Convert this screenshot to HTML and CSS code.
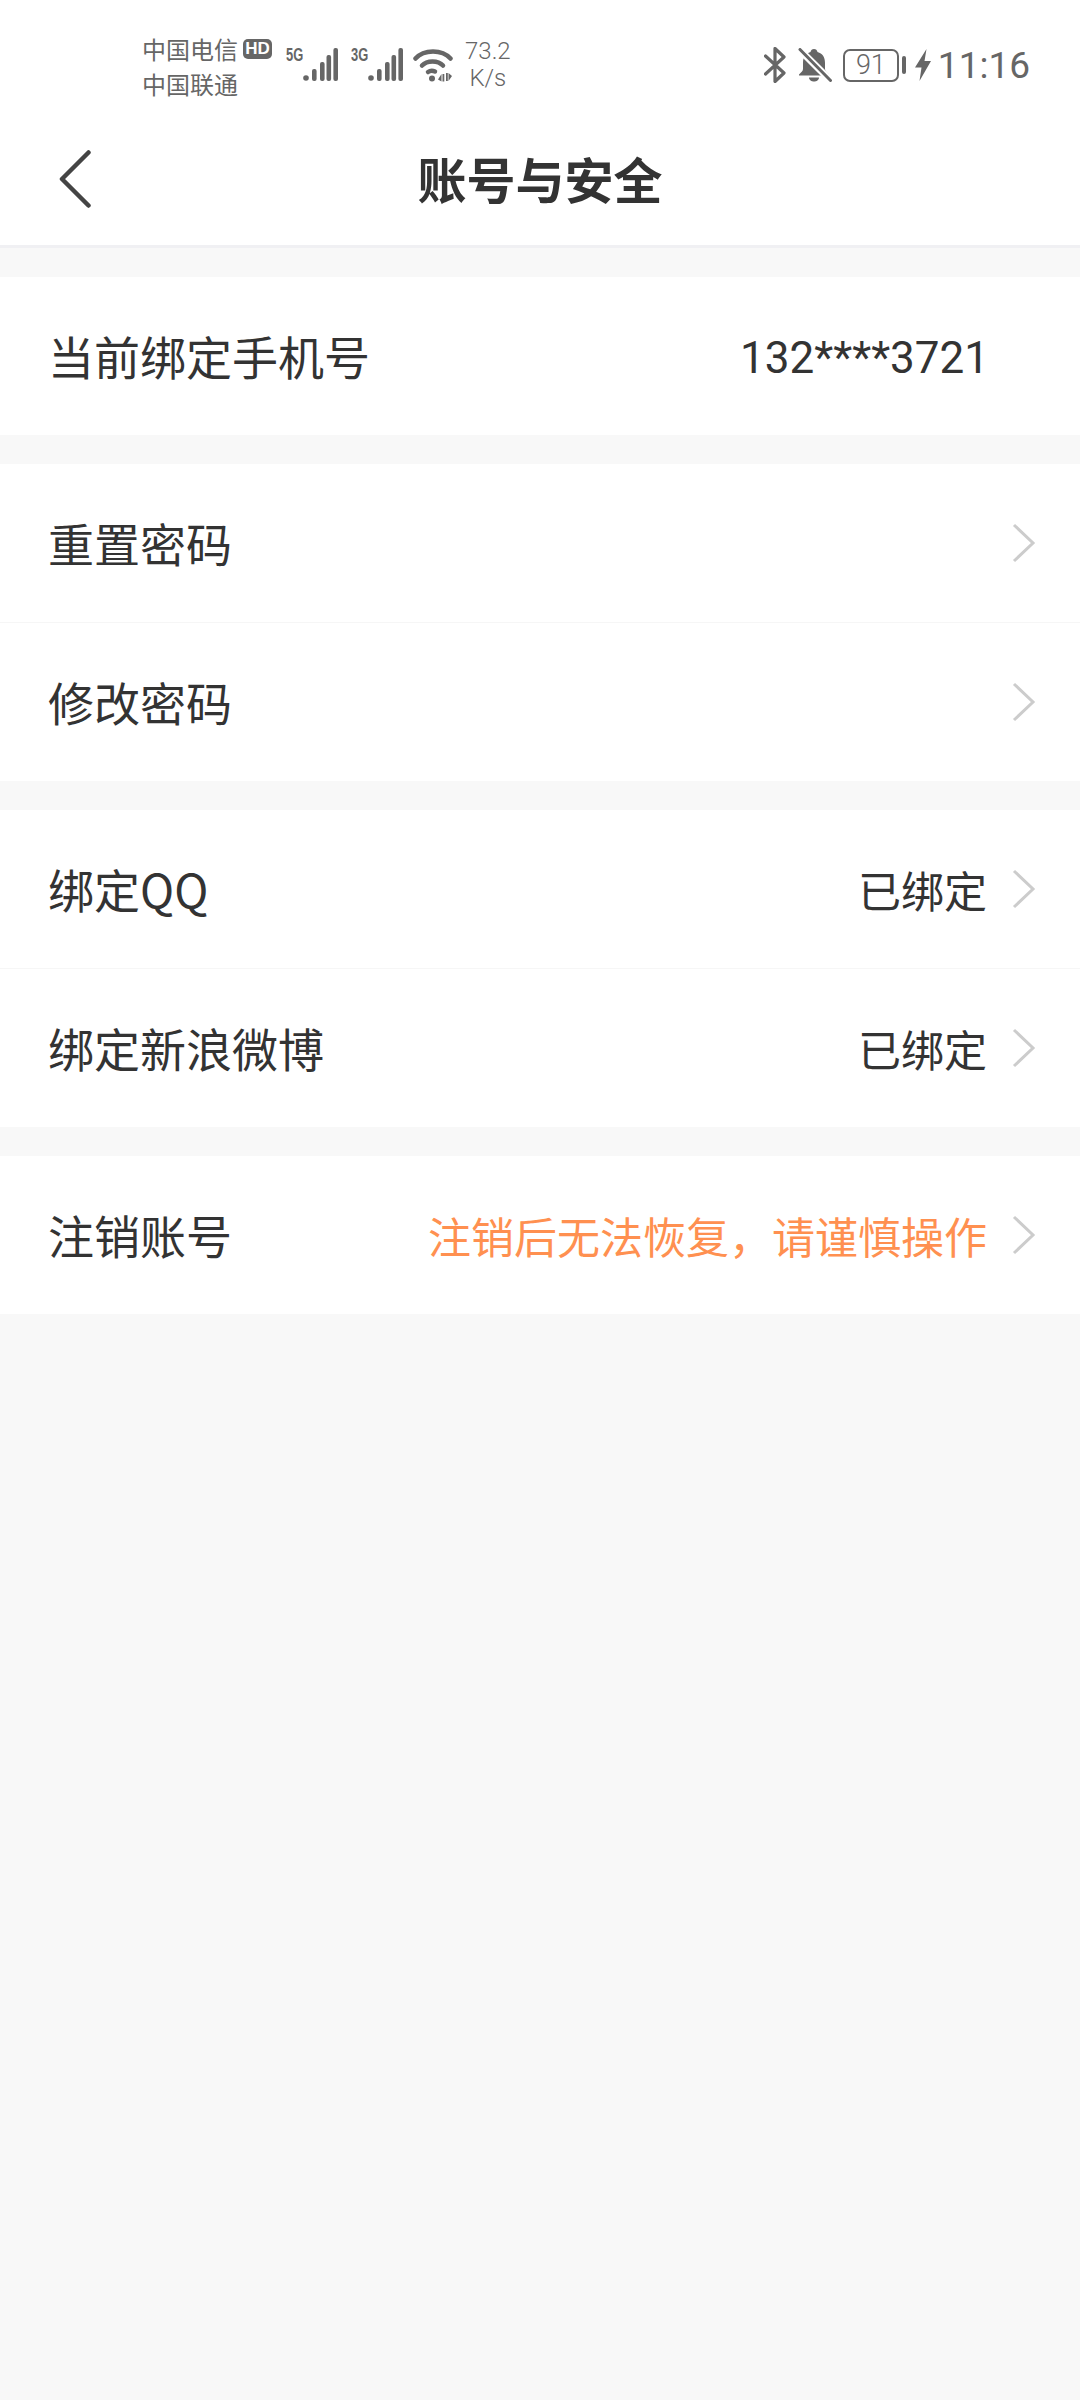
FILE: index.html
```html
<!DOCTYPE html>
<html lang="zh-CN">

<head>
    <meta charset="UTF-8">
    <meta name="viewport" content="width=device-width, initial-scale=1.0">
    <title>账号与安全</title>
    <link rel="stylesheet" href="styles.css">
</head>

<body>

    <div class="status-bar">
        <div class="status-left">
            <div class="carriers">
                <div class="carrier-line">中国电信<span class="hd">HD</span></div>
                <div class="carrier-line">中国联通</div>
            </div>
            <div class="signal">
                <span class="net">5G</span>
                <svg width="35" height="33" viewBox="0 0 35 33"><g fill="#666"><circle cx="3" cy="30" r="2.800"/><rect x="9" y="21" width="4.600" height="12" rx="2"/><rect x="17" y="14" width="4.600" height="19" rx="2"/><rect x="23.500" y="7" width="4.600" height="26" rx="2"/><rect x="30.400" y="0" width="4.600" height="33" rx="2"/></g></svg>
            </div>
            <div class="signal">
                <span class="net">3G</span>
                <svg width="35" height="33" viewBox="0 0 35 33"><g fill="#666"><circle cx="3" cy="30" r="2.800"/><rect x="9" y="21" width="4.600" height="12" rx="2"/><rect x="17" y="14" width="4.600" height="19" rx="2"/><rect x="23.500" y="7" width="4.600" height="26" rx="2"/><rect x="30.400" y="0" width="4.600" height="33" rx="2"/></g></svg>
            </div>
            <svg class="wifi" width="40" height="34" viewBox="0 0 40 34"><g fill="none" stroke="#666" stroke-width="4.500" stroke-linecap="round"><path d="M2.500 10.500C11 1 29 1 37.500 10.500"/><path d="M9 17.500C14 12 25 12 30 17.500"/><path d="M15 24C17 22.500 20 22.500 22 23.500"/></g><circle cx="19" cy="30.500" r="3" fill="#666"/><path d="M28.500 33.500V26L25 31.500ZM35.500 25V33L39 28Z" fill="#666"/><path d="M29.500 26h1.800v7.500h-1.800zM33 25h1.800v8h-1.800z" fill="#666"/></svg>
            <div class="speed">
                <div>73.2</div>
                <div>K/s</div>
            </div>
        </div>
        <div class="status-right">
            <svg class="bt" width="22" height="36" viewBox="0 0 22 36"><path d="M1.500 9L20 26L11 34.500V1.500L20 10L1.500 27" fill="none" stroke="#666" stroke-width="3.200" stroke-linejoin="round" stroke-linecap="round"/></svg>
            <svg class="bell" width="34" height="34" viewBox="0 0 34 34"><path d="M16 1c2 0 3 1 3.500 3 5 1.500 7.500 5 7.500 11v6c0 2 2 3.500 4 5.500v1H1v-1c2-2 4-3.500 4-5.500v-6c0-6 2.500-9.500 7.500-11 .5-2 1.500-3 3.500-3z" fill="#666"/><path d="M11 29.500h10c0 2.500-2.500 4-5 4s-5-1.500-5-4z" fill="#666"/><path d="M1 1L33 33" stroke="white" stroke-width="7"/><path d="M2 1.500L32.500 32.500" stroke="#666" stroke-width="3" stroke-linecap="round"/></svg>
            <div class="battery">
                <div class="battery-body">91</div>
                <div class="battery-tip"></div>
            </div>
            <svg class="bolt" width="16" height="32" viewBox="0 0 16 32"><path d="M11.500 0L0 18.500H6.500L4.500 32L16 12H9.500Z" fill="#666"/></svg>
            <div class="clock">11:16</div>
        </div>
    </div>

    <div class="nav-bar">
        <svg class="back" width="32" height="58" viewBox="0 0 32 58"><path d="M29.500 2.500L3 29L29.500 55.500" fill="none" stroke="#444" stroke-width="4.500" stroke-linecap="round" stroke-linejoin="round"/></svg>
        <h1>账号与安全</h1>
    </div>

    <div class="group">
        <div class="row">
            <span class="label">当前绑定手机号</span>
            <span class="value phone">132****3721</span>
        </div>
    </div>

    <div class="group">
        <div class="row">
            <span class="label">重置密码</span>
            <svg class="arrow" width="24" height="40" viewBox="0 0 24 40"><path d="M2 2L21 20L2 38" fill="none" stroke="#ccc" stroke-width="3"/></svg>
        </div>
        <div class="row">
            <span class="label">修改密码</span>
            <svg class="arrow" width="24" height="40" viewBox="0 0 24 40"><path d="M2 2L21 20L2 38" fill="none" stroke="#ccc" stroke-width="3"/></svg>
        </div>
    </div>

    <div class="group">
        <div class="row">
            <span class="label">绑定QQ</span>
            <span class="value">已绑定</span>
            <svg class="arrow" width="24" height="40" viewBox="0 0 24 40"><path d="M2 2L21 20L2 38" fill="none" stroke="#ccc" stroke-width="3"/></svg>
        </div>
        <div class="row">
            <span class="label">绑定新浪微博</span>
            <span class="value">已绑定</span>
            <svg class="arrow" width="24" height="40" viewBox="0 0 24 40"><path d="M2 2L21 20L2 38" fill="none" stroke="#ccc" stroke-width="3"/></svg>
        </div>
    </div>

    <div class="group">
        <div class="row">
            <span class="label">注销账号</span>
            <span class="value warn">注销后无法恢复，请谨慎操作</span>
            <svg class="arrow" width="24" height="40" viewBox="0 0 24 40"><path d="M2 2L21 20L2 38" fill="none" stroke="#ccc" stroke-width="3"/></svg>
        </div>
    </div>

</body>

</html>
```

FILE: styles.css
```css
body {
    font-family: "Noto Sans CJK SC", "Noto Sans", sans-serif;
    background-color: #f8f8f8;
    color: #333;
    margin: 0;
    min-height: 2400px;
}

.status-bar {
    height: 122px;
    box-sizing: border-box;
    padding: 31px 50px 0 142px;
    background-color: white;
    color: #666;
    display: flex;
    justify-content: space-between;
    align-items: flex-start;
}

.status-left,
.status-right {
    display: flex;
    align-items: flex-start;
}

.carriers {
    font-size: 24px;
    line-height: 35px;
    width: 144px;
    flex-shrink: 0;
}

.carrier-line {
    display: flex;
    align-items: center;
    white-space: nowrap;
}

.hd {
    width: 29px;
    height: 20px;
    margin-left: 5px;
    background-color: #666;
    color: white;
    font-family: "Liberation Sans", sans-serif;
    font-weight: bold;
    font-size: 17px;
    line-height: 20px;
    text-align: center;
    border-radius: 5px;
}

.signal {
    display: flex;
    width: 65px;
    margin-top: 17px;
    flex-shrink: 0;
}

.net {
    font-family: "Liberation Sans", sans-serif;
    font-weight: bold;
    font-size: 19px;
    line-height: 14px;
    width: 17px;
    transform: scaleX(0.68);
    transform-origin: left;
}

.wifi {
    margin: 17px 0 0 -3px;
}

.speed {
    font-family: "Roboto", sans-serif;
    font-weight: 300;
    font-size: 24px;
    line-height: 27px;
    text-align: center;
    margin: 7px 0 0 12px;
}

.status-right {
    height: 68px;
    align-items: center;
}

.bt {
    margin-right: 12px;
}

.bell {
    margin-right: 11px;
}

.battery {
    display: flex;
    align-items: center;
    margin-right: 9px;
}

.battery-body {
    width: 56px;
    height: 33px;
    box-sizing: border-box;
    border: 2.500px solid #666;
    border-radius: 7px;
    font-family: "Roboto", sans-serif;
    font-weight: 300;
    font-size: 27px;
    line-height: 28px;
    text-align: center;
}

.battery-tip {
    width: 4px;
    height: 18px;
    margin-left: 3px;
    background-color: #666;
    border-radius: 2px;
}

.bolt {
    margin-right: 7px;
}

.clock {
    font-family: "Roboto", sans-serif;
    font-size: 37px;
    line-height: 44px;
    padding-top: 2px;
}

.nav-bar {
    height: 123px;
    box-sizing: content-box;
    background-color: white;
    border-bottom: 3px solid #f0f0f3;
    display: flex;
    align-items: center;
    justify-content: center;
    position: relative;
}

.back {
    position: absolute;
    left: 59px;
    top: 28px;
}

h1 {
    font-size: 49px;
    font-weight: bold;
    margin: 0 0 12px;
}

.group {
    margin-top: 29px;
    background-color: white;
}

.row {
    height: 158px;
    box-sizing: border-box;
    padding: 0 44px 0 48px;
    display: flex;
    align-items: center;
    font-size: 46px;
}

.row + .row {
    height: 159px;
    border-top: 1px solid #f6f6f6;
}

.label {
    flex: 1;
    padding-bottom: 2px;
}

.value {
    font-size: 43px;
    margin-right: 25px;
}

.phone {
    font-family: "Roboto", sans-serif;
    font-size: 44px;
    padding-top: 4px;
    margin-right: 47px;
}

.warn {
    color: #ff9050;
}
```
